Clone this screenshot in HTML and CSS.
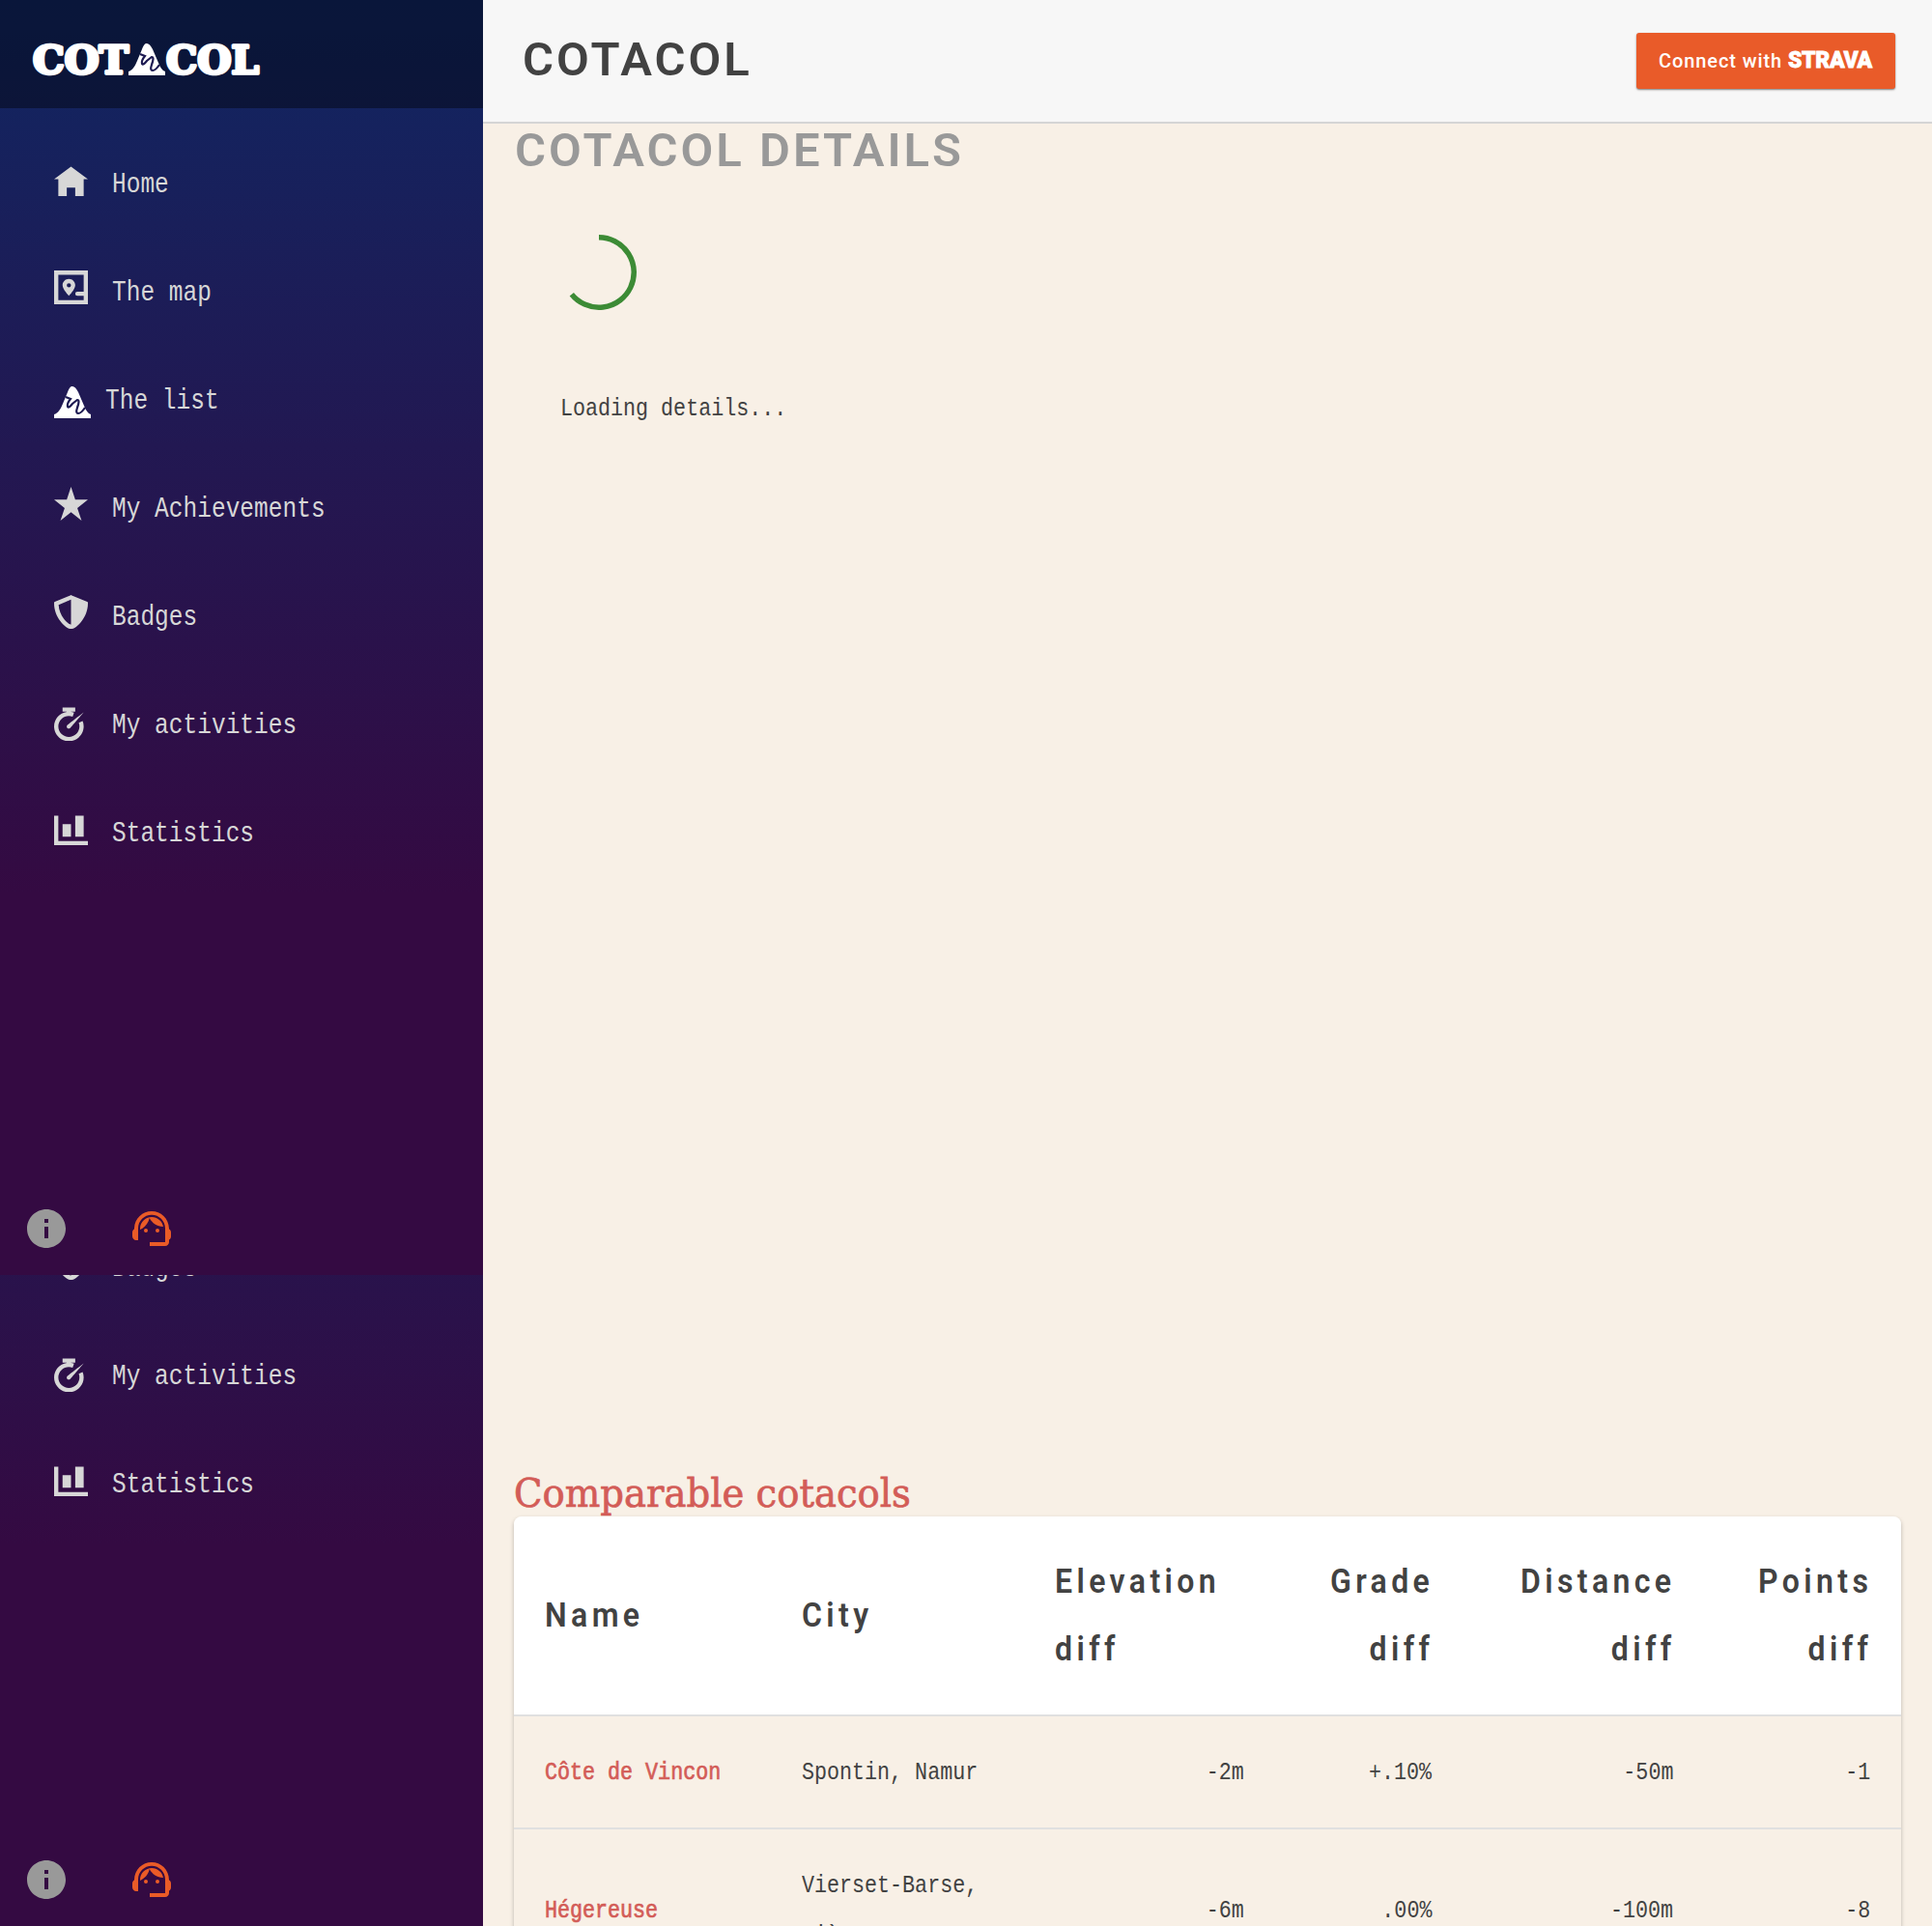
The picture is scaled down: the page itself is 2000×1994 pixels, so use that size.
FILE: index.html
```html
<!DOCTYPE html>
<html lang="en">
<head>
<meta charset="utf-8">
<title>Cotacol</title>
<link rel="stylesheet" href="styles.css">
</head>
<body>
<svg class="defs" aria-hidden="true">
  <symbol id="home" viewBox="0 -1 8 9"><path d="M4 0l-4 3h1v4h2v-2h2v2h2v-4.03l1 .03-4-3z"/></symbol>
  <symbol id="map" viewBox="0 0 8 9"><path fill-rule="evenodd" d="M0 0v8h8v-8zM1 1h6v4h-1.500a.5.5 0 0 0 0 1h1.500v1h-6zM3.500 2c-.83 0-1.500.67-1.500 1.500 0 1 1.500 2.500 1.500 2.500s1.500-1.500 1.500-2.500c0-.83-.67-1.500-1.500-1.500zM3.500 3a.5.5 0 1 1 0 1 .5.5 0 0 1 0-1z"/></symbol>
  <symbol id="star" viewBox="0 0 8 9"><path d="M4 0l-1 3h-3l2.500 2-1 3 2.500-2 2.500 2-1-3 2.500-2h-3l-1-3z"/></symbol>
  <symbol id="shield" viewBox="0 0 8 9"><path d="M4 0l-.19.09-3.500 1.470-.31.13v.31c0 1.660.67 3.120 1.470 4.190.4.53.83.97 1.250 1.280.42.31.83.53 1.280.53.46 0 .86-.22 1.280-.53.42-.31.85-.75 1.250-1.280.8-1.070 1.470-2.530 1.470-4.190v-.31l-.31-.13-3.500-1.470-.19-.09zm0 1.090v5.910c-.04 0-.33-.07-.66-.31s-.71-.63-1.060-1.090c-.64-.85-1.140-2.030-1.220-3.280l2.940-1.220z"/></symbol>
  <symbol id="timer" viewBox="0 -1 8 9"><path d="M2 0v1h1v.03c-1.700.24-3 1.710-3 3.470 0 1.930 1.570 3.500 3.500 3.500s3.500-1.570 3.500-3.500c0-.45-.1-.87-.25-1.250l-.91.38c.11.29.16.57.16.88 0 1.390-1.110 2.500-2.500 2.500s-2.500-1.110-2.500-2.500 1.110-2.500 2.500-2.500c.3 0 .59.05.88.16l.34-.94c-.23-.08-.47-.12-.72-.16v-.06h1v-1h-3zm5 1.160s-3.650 2.810-3.880 3.030c-.19.2-.19.49 0 .69.2.19.49.19.69 0 .23-.23 3.190-3.720 3.190-3.720z"/></symbol>
  <symbol id="chart" viewBox="0 -1 8 9"><path d="M0 0v7h8v-1h-7v-6h-1zm5 0v5h2v-5h-2zm-3 2v3h2v-3h-2z"/></symbol>
  <symbol id="peak" viewBox="0 0 38 33"><path fill="#fff" d="M0 33v-4c4-1 7-6 9-11l5-12c2-5 3-6 5-6s4 2 6 6l6 14c2 5 4 8 7 9v4z"/><path class="squiggle" d="M12 11L17 13Q13 18 14 21Q15 23 19 18L24 14Q27 14 24 22Q22 28 25 28Q28 28 32 22"/></symbol>
  <symbol id="info" viewBox="0 0 24 24"><path d="M12 2C6.480 2 2 6.480 2 12s4.480 10 10 10 10-4.480 10-10S17.520 2 12 2zm1 15h-2v-6h2v6zm0-8h-2V7h2v2z"/></symbol>
  <symbol id="agent" viewBox="0 0 24 24"><path d="M21 12.220C21 6.730 16.740 3 12 3c-4.690 0-9 3.650-9 9.280-.6.34-1 .98-1 1.720v2c0 1.100.9 2 2 2h1v-6.100c0-3.870 3.130-7 7-7s7 3.130 7 7V19h-8v2h8c1.100 0 2-.9 2-2v-1.220c.59-.31 1-.92 1-1.640v-2.300c0-.7-.41-1.310-1-1.620z"/><circle cx="9" cy="13" r="1"/><circle cx="15" cy="13" r="1"/><path d="M18 11.030C17.520 8.180 15.040 6 12.050 6c-3.030 0-6.290 2.510-6.030 6.450 2.470-1.010 4.330-3.210 4.860-5.890 1.310 2.630 4 4.440 7.120 4.470z"/></symbol>
</svg>
<div class="page">
  <aside class="sidebar">
    <div class="panel">
      <div class="brand">
        <svg class="logo" width="240" height="44" viewBox="0 0 240 44">
          <text x="2" y="33" textLength="99" lengthAdjust="spacingAndGlyphs">COT</text>
          <use href="#peak" x="101" y="2" width="38" height="33"/>
          <text x="140" y="33" textLength="96" lengthAdjust="spacingAndGlyphs">COL</text>
        </svg>
      </div>
      <nav class="menu">
        <a class="item"><svg class="icon"><use href="#home"/></svg><span class="label">Home</span></a>
        <a class="item"><svg class="icon"><use href="#map"/></svg><span class="label">The map</span></a>
        <a class="item item-list"><svg class="icon"><use href="#peak"/></svg><span class="label">The list</span></a>
        <a class="item"><svg class="icon"><use href="#star"/></svg><span class="label">My Achievements</span></a>
        <a class="item"><svg class="icon"><use href="#shield"/></svg><span class="label">Badges</span></a>
        <a class="item"><svg class="icon"><use href="#timer"/></svg><span class="label">My activities</span></a>
        <a class="item"><svg class="icon"><use href="#chart"/></svg><span class="label">Statistics</span></a>
      </nav>
      <div class="tools"><svg class="info"><use href="#info"/></svg><svg class="agent"><use href="#agent"/></svg></div>
    </div>
    <div class="tail">
      <div class="panel">
        <div class="brand"></div>
        <nav class="menu">
          <a class="item"></a><a class="item"></a><a class="item"></a><a class="item"></a>
          <a class="item"><svg class="icon"><use href="#shield"/></svg><span class="label">Badges</span></a>
          <a class="item"><svg class="icon"><use href="#timer"/></svg><span class="label">My activities</span></a>
          <a class="item"><svg class="icon"><use href="#chart"/></svg><span class="label">Statistics</span></a>
        </nav>
        <div class="tools"><svg class="info"><use href="#info"/></svg><svg class="agent"><use href="#agent"/></svg></div>
      </div>
    </div>
  </aside>
  <main class="main">
    <header class="top">
      <h1 class="title"><span class="wide">COTACOL</span></h1>
      <a class="strava"><span class="connect">Connect with</span><span class="mark">STRAVA</span></a>
    </header>
    <section class="details">
      <h2 class="subtitle"><span class="wide">COTACOL DETAILS</span></h2>
      <svg class="spinner" viewBox="0 0 80 80"><path d="M40 3.750A36.250 36.250 0 1 1 11.800 62.800"/></svg>
      <p class="loading"><span class="mono">Loading details...</span></p>
    </section>
    <section class="compare">
      <h3 class="heading"><span class="serif">Comparable cotacols</span></h3>
      <div class="table">
        <div class="row head">
          <div class="cell"><span class="th">Name</span></div>
          <div class="cell"><span class="th">City</span></div>
          <div class="cell"><span class="th">Elevation<br>diff</span></div>
          <div class="cell num"><span class="th">Grade<br>diff</span></div>
          <div class="cell num"><span class="th">Distance<br>diff</span></div>
          <div class="cell num"><span class="th">Points<br>diff</span></div>
        </div>
        <div class="row">
          <div class="cell"><a class="mono link">Côte de Vincon</a></div>
          <div class="cell"><span class="mono">Spontin, Namur</span></div>
          <div class="cell num"><span class="mono">-2m</span></div>
          <div class="cell num"><span class="mono">+.10%</span></div>
          <div class="cell num"><span class="mono">-50m</span></div>
          <div class="cell num"><span class="mono">-1</span></div>
        </div>
        <div class="row tall">
          <div class="cell"><a class="mono link">Hégereuse</a></div>
          <div class="cell"><span class="mono">Vierset-Barse,<br>Liège</span></div>
          <div class="cell num"><span class="mono">-6m</span></div>
          <div class="cell num"><span class="mono">.00%</span></div>
          <div class="cell num"><span class="mono">-100m</span></div>
          <div class="cell num"><span class="mono">-8</span></div>
        </div>
      </div>
    </section>
  </main>
</div>
</body>
</html>
```
FILE: styles.css
```css
* { box-sizing: border-box; }
body { margin: 0; background: #f8f0e6; color: #424242; }
h1, h2, h3, p { margin: 0; font-weight: normal; }
.defs { display: none; }
.page { display: flex; height: 1994px; overflow: hidden; }

/* Sidebar */
.sidebar { width: 500px; flex: none; display: flex; flex-direction: column; }
.panel { height: 1320px; flex: none; display: flex; flex-direction: column; background: linear-gradient(180deg, #102662 0%, #340a42 70%); }
.tail { height: 674px; overflow: hidden; display: flex; flex-direction: column; justify-content: flex-end; }
.brand { height: 112px; background: rgba(0, 0, 0, .4); padding: 43px 0 0 32px; }
.logo { display: block; overflow: visible; font: bold 39px "DejaVu Serif", serif; fill: #fff; }
.logo text { stroke: #fff; stroke-width: 3.4px; stroke-linejoin: round; }
.squiggle { fill: none; stroke: #1d1a52; stroke-width: 2.2; }
.menu { padding-top: 22px; flex: 1; }
.item { height: 112px; display: flex; padding: 34px 0 0 56px; color: #d7d7d7; }
.icon { width: 35px; height: 39.4px; margin-right: 25px; fill: #d7d7d7; flex: none; }
.item-list .icon { width: 38px; height: 33px; margin: 8px 15px 0 0; }
.label { font: 29px/48px "Liberation Mono", monospace; white-space: pre; display: inline-block; transform: scaleX(.845); transform-origin: left; height: 48px; }
.tools { display: flex; padding: 0 24px 24px; gap: 61px; }
.tools svg { width: 48px; height: 48px; }
.info { fill: #999; }
.agent { fill: #ea5b27; }

/* Header */
.main { flex: 1; display: flex; flex-direction: column; }
.top { height: 128px; flex: none; background: #f7f7f7; border-bottom: 2px solid #d5d5d5; display: flex; justify-content: space-between; align-items: flex-start; padding: 34px 38px 0 41px; }
.wide { font: 600 49px/56px Roboto, sans-serif; letter-spacing: 3px; white-space: pre; display: inline-block; }
.strava { width: 268px; height: 58px; background: #e95b29; border-radius: 3px; box-shadow: 0 1px 2px rgba(0, 0, 0, .5); color: #fff; display: flex; align-items: center; padding-left: 23px; }
.connect { font: 500 20px/30px Roboto, sans-serif; letter-spacing: .9px; width: 134px; white-space: pre; }
.mark { font: 900 23px/30px Roboto, sans-serif; letter-spacing: -.3px; -webkit-text-stroke: .8px #fff; }

/* Details */
.details { height: 1392px; flex: none; padding: 0 32px; display: flex; flex-direction: column; align-items: flex-start; }
.subtitle { color: #999; height: 56px; padding-left: 1px; }
.spinner { width: 80px; height: 80px; margin: 58px 0 0 48px; }
.spinner path { fill: none; stroke: #3c8b35; stroke-width: 5.5; }
.loading { margin: 75px 0 0 48px; }
.mono { font: 26px/52px "Liberation Mono", monospace; white-space: pre; display: inline-block; transform: scaleX(.834); transform-origin: left; }
.num .mono { transform-origin: right; }
.link { color: #d35c57; -webkit-text-stroke: .7px #d35c57; }

/* Comparison table */
.compare { padding: 0 32px; flex: none; }
.heading { height: 50px; color: #d35c57; }
.serif { font: 41px/53px "DejaVu Serif", serif; display: inline-block; transform: scaleX(.941); transform-origin: left; white-space: pre; -webkit-text-stroke: .7px #d35c57; }
.table { border-radius: 8px 8px 0 0; overflow: hidden; box-shadow: 0 2px 4px rgba(0, 0, 0, .25); }
.row { display: grid; grid-template-columns: 266px 262px 260px 194px 250px 204px; height: 117px; align-items: center; border-bottom: 2px solid #e0e0e0; background: #f8f0e6; }
.head { height: 207px; background: #fff; }
.tall { height: 169px; }
.cell { padding: 0 32px; }
.num { text-align: right; }
.th { font: 600 35px/70px Roboto, sans-serif; letter-spacing: 4.8px; display: inline-block; white-space: pre; transform: scaleX(.915); transform-origin: left; }
.num .th { transform-origin: right; margin: 0 -2px 0 -40px; }
```
